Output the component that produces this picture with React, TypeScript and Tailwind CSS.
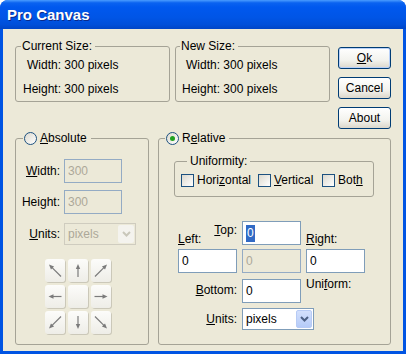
import type { ReactNode } from "react";

function Radio({ checked }: { checked?: boolean }) {
  return (
    <span className="flex h-[13px] w-[13px] items-center justify-center rounded-full border border-[#1c5180] bg-[linear-gradient(135deg,#dcd9ce,#ffffff)]">
      {checked && <span className="h-[5px] w-[5px] rounded-full bg-[#21a121]" />}
    </span>
  );
}

function Check({ label }: { label: ReactNode }) {
  return (
    <span className="flex items-center">
      <span className="h-[13px] w-[13px] border border-[#1c5180] bg-[linear-gradient(135deg,#dcd9ce,#ffffff)]" />
      <span className="ml-[3px]">{label}</span>
    </span>
  );
}

function Group({
  legend,
  legendCls,
  className,
  children,
}: {
  legend: ReactNode;
  legendCls: string;
  className: string;
  children: ReactNode;
}) {
  return (
    <fieldset className={`rounded-[3px] border border-[#a5a396] ${className}`}>
      <legend className={`leading-[14px] ${legendCls}`}>
        <span className="flex items-center">{legend}</span>
      </legend>
      {children}
    </fieldset>
  );
}

function Btn({ children, isDefault }: { children: ReactNode; isDefault?: boolean }) {
  return (
    <button
      type="button"
      className={`h-[22px] w-[53px] rounded-[3px] border border-[#003c74] bg-[linear-gradient(to_bottom,#ffffff,#f3f3ee_60%,#dcd7cb)] text-[12px] leading-none text-black ${
        isDefault ? "shadow-[inset_0_0_0_1px_#b9d1f8]" : ""
      }`}
    >
      {children}
    </button>
  );
}

function TextBox({
  value,
  disabled,
  selected,
  className = "w-[59px]",
}: {
  value: string;
  disabled?: boolean;
  selected?: boolean;
  className?: string;
}) {
  return (
    <div
      className={`flex h-[24px] items-center border px-[3px] ${className} ${
        disabled ? "border-[#94abc4] bg-[#ece9d8] text-[#aca899]" : "border-[#7f9db9] bg-white text-black"
      }`}
    >
      {selected ? (
        <span className="flex h-[17px] items-center bg-[#316ac5] px-[1px] text-white">{value}</span>
      ) : (
        value
      )}
    </div>
  );
}

function Select({ disabled }: { disabled?: boolean }) {
  return (
    <div
      className={`flex h-[22px] w-[72px] items-center border p-[1px] ${
        disabled ? "border-[#cfccbf] bg-[#ece9d8] text-[#aca899]" : "border-[#7f9db9] bg-white text-black"
      }`}
    >
      <span className="flex-1 pl-[2px]">pixels</span>
      <span
        className={`flex h-full w-[16px] items-center justify-center rounded-[2px] ${
          disabled
            ? "bg-[#f4f3ee]"
            : "border border-[#b7cbf5] bg-[linear-gradient(to_bottom,#d3e0fd,#b5cbf8)]"
        }`}
      >
        <svg width="9" height="6" viewBox="0 0 9 6">
          <path
            d="M1 1 L4.5 4.5 L8 1"
            fill="none"
            stroke={disabled ? "#c9c7ba" : "#4d6185"}
            strokeWidth="2"
          />
        </svg>
      </span>
    </div>
  );
}

function Arrow({ deg, len }: { deg: number; len: number }) {
  const top = 11.5 - len / 2;
  const bottom = 11.5 + len / 2;
  return (
    <svg width="20" height="23" viewBox="0 0 20 23">
      <g transform={`rotate(${deg} 10 11.5)`}>
        <line x1="10" y1={bottom} x2="10" y2={top + 3} stroke="#7b7b7b" strokeWidth="1.2" />
        <polygon points={`10,${top} 7.8,${top + 5} 12.2,${top + 5}`} fill="#7b7b7b" />
      </g>
    </svg>
  );
}

const arrows: ({ deg: number; len: number } | null)[] = [
  { deg: -45, len: 17 },
  { deg: 0, len: 13 },
  { deg: 45, len: 17 },
  { deg: -90, len: 13 },
  null,
  { deg: 90, len: 13 },
  { deg: -135, len: 17 },
  { deg: 180, len: 13 },
  { deg: 135, len: 17 },
];

export default function App() {
  return (
    <div className="h-[354px] w-[406px] bg-white font-['Liberation_Sans',Arial,sans-serif] text-[12px] leading-[14px] text-black">
      <div className="flex h-full w-full flex-col rounded-t-[8px] bg-[#0054e3]">
        <div className="flex h-[29px] items-center rounded-t-[8px] bg-[linear-gradient(to_bottom,#4a9cff_0%,#0a62f0_10%,#0058ee_25%,#0055e6_60%,#004fd9_85%,#0045c6_100%)] pl-[7px] text-[15px] font-bold text-white [text-shadow:1px_1px_0_#0b2a8a]">
          Pro Canvas
        </div>

        <div className="mx-[3px] mb-[3px] flex-1 bg-[#ece9d8] pl-[12px] pt-[10px]">
          <div className="flex items-start">
            <Group className="h-[63px] w-[155px]" legendCls="ml-[5px] pl-[1px] pr-[3px]" legend="Current Size:">
              <div className="mt-[5px] pl-[11px]">Width: 300 pixels</div>
              <div className="mt-[10px] pl-[7px]">Height: 300 pixels</div>
            </Group>
            <Group className="ml-[5px] h-[63px] w-[155px]" legendCls="ml-[4px] pl-[1px] pr-[3px]" legend="New Size:">
              <div className="mt-[5px] pl-[10px]">Width: 300 pixels</div>
              <div className="mt-[10px] pl-[6px]">Height: 300 pixels</div>
            </Group>
            <div className="ml-[8px] mt-[8px] flex flex-col gap-[8px]">
              <Btn isDefault>
                <u>O</u>k
              </Btn>
              <Btn>Cancel</Btn>
              <Btn>About</Btn>
            </div>
          </div>

          <div className="mt-[2px] flex">
            <Group
              className="h-[214px] w-[134px]"
              legendCls="ml-[7px] pl-[1px] pr-[4px]"
              legend={
                <>
                  <Radio />
                  <span className="ml-[3px]">
                    <u>A</u>bsolute
                  </span>
                </>
              }
            >
              <div className="mt-[14px] flex items-center">
                <span className="w-[44px] text-right">
                  <u>W</u>idth:
                </span>
                <TextBox className="ml-[4px] w-[58px]" value="300" disabled />
              </div>
              <div className="mt-[7px] flex items-center">
                <span className="w-[44px] text-right">
                  Hei<u>g</u>ht:
                </span>
                <TextBox className="ml-[4px] w-[58px]" value="300" disabled />
              </div>
              <div className="mt-[9px] flex items-center">
                <span className="w-[44px] text-right">
                  <u>U</u>nits:
                </span>
                <div className="ml-[4px]">
                  <Select disabled />
                </div>
              </div>
              <div className="ml-[29px] mt-[14px] grid w-[66px] grid-cols-3 gap-[3px]">
                {arrows.map((a, i) => (
                  <div
                    key={i}
                    className="flex h-[23px] w-[20px] items-center justify-center rounded-[3px] bg-[linear-gradient(to_bottom,#fcfcfa,#eeede7)] shadow-[1px_1px_0_#cbc8b9]"
                  >
                    {a && <Arrow deg={a.deg} len={a.len} />}
                  </div>
                ))}
              </div>
            </Group>

            <Group
              className="ml-[9px] h-[214px] w-[233px]"
              legendCls="ml-[6px] pl-[1px] pr-[4px]"
              legend={
                <>
                  <Radio checked />
                  <span className="ml-[3px]">
                    R<u>e</u>lative
                  </span>
                </>
              }
            >
              <Group className="ml-[15px] mt-[9px] h-[43px] w-[200px]" legendCls="ml-[12px] px-[3px]" legend="Uniformity:">
                <div className="mt-[5px] flex items-center pl-[6px]">
                  <span className="w-[77px]">
                    <Check
                      label={
                        <>
                          Hori<u>z</u>ontal
                        </>
                      }
                    />
                  </span>
                  <span className="w-[64px]">
                    <Check
                      label={
                        <>
                          <u>V</u>ertical
                        </>
                      }
                    />
                  </span>
                  <Check
                    label={
                      <>
                        Bot<u>h</u>
                      </>
                    }
                  />
                </div>
              </Group>

              <div className="ml-[19px] mt-[24px]">
                <div className="flex h-[28px] items-start">
                  <div className="flex w-[59px] justify-between">
                    <span className="mt-[11px]">
                      <u>L</u>eft:
                    </span>
                    <span className="mt-[2px]">
                      <u>T</u>op:
                    </span>
                  </div>
                  <TextBox className="ml-[5px] w-[59px]" value="0" selected />
                  <span className="ml-[5px] mt-[11px]">
                    <u>R</u>ight:
                  </span>
                </div>
                <div className="flex gap-[5px]">
                  <TextBox value="0" />
                  <TextBox value="0" disabled />
                  <TextBox value="0" />
                </div>
                <div className="mt-[6px] flex items-start">
                  <span className="mt-[4px] w-[59px] text-right">
                    <u>B</u>ottom:
                  </span>
                  <TextBox className="ml-[5px] w-[59px]" value="0" />
                  <span className="-mt-[2px] ml-[5px]">
                    Uni<u>f</u>orm:
                  </span>
                </div>
                <div className="mt-[5px] flex items-center">
                  <span className="w-[59px] text-right">
                    <u>U</u>nits:
                  </span>
                  <div className="ml-[5px]">
                    <Select />
                  </div>
                </div>
              </div>
            </Group>
          </div>
        </div>
      </div>
    </div>
  );
}
